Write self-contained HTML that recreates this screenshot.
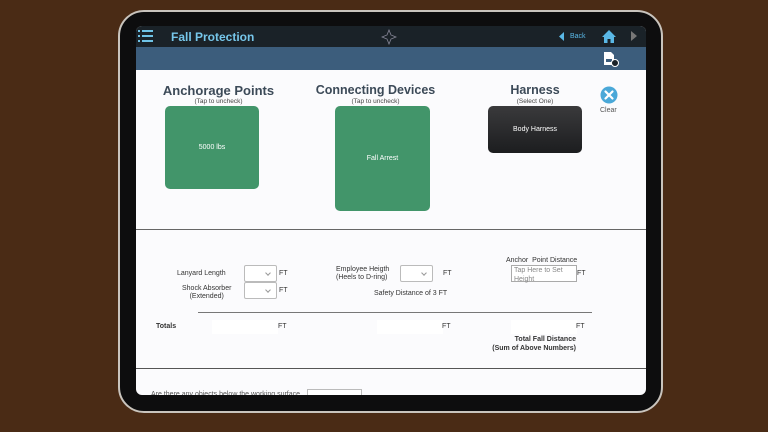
<!DOCTYPE html>
<html><head><meta charset="utf-8"><style>
*{margin:0;padding:0;box-sizing:border-box}
body{width:768px;height:432px;overflow:hidden;background:#4a2b15;font-family:"Liberation Sans",sans-serif;position:relative}
.abs{position:absolute}
.frame{left:118px;top:10px;width:545px;height:403px;border-radius:26px;background:#0d0d0e;border:2px solid #c9c4bd}
.screen{left:136px;top:26px;width:510px;height:369px;border-radius:6px;overflow:hidden;background:#fbfbfd}
.hdr{left:0;top:0;width:510px;height:21px;background:#1a2228}
.blue{left:0;top:21px;width:510px;height:23px;background:#3c5d7c}
.t{position:absolute;color:#333;font-size:7px;white-space:nowrap}
.h{position:absolute;color:#3c4a58;font-size:12.5px;font-weight:bold;text-align:center;white-space:nowrap}
.sub{position:absolute;color:#444;font-size:6.5px;text-align:center;white-space:nowrap}
.box{position:absolute;border-radius:5px;background:#42956a;color:#fff;font-size:7px;display:flex;align-items:center;justify-content:center}
.sel{position:absolute;width:33px;height:17px;border:1px solid #bbb;background:#fff;border-radius:2px}
.sel:after{content:"";position:absolute;right:6px;top:5px;width:3px;height:3px;border-right:1px solid #999;border-bottom:1px solid #999;transform:rotate(45deg)}
.in{position:absolute;background:#fff;height:14px}
</style></head><body>
<div class="abs frame"></div>
<div class="abs screen">
 <div class="abs hdr">
  <svg class="abs" style="left:2px;top:3px" width="15" height="14"><g fill="#6fc3e6"><rect x="0" y="1" width="2" height="2"/><rect x="4" y="1" width="11" height="2"/><rect x="0" y="6" width="2" height="2"/><rect x="4" y="6" width="11" height="2"/><rect x="0" y="11" width="2" height="2"/><rect x="4" y="11" width="11" height="2"/></g></svg>
  <div class="abs" style="left:35px;top:4px;color:#76c6ea;font-size:12px;font-weight:bold">Fall Protection</div>
  <svg class="abs" style="left:245px;top:3px" width="16" height="16"><path d="M8 1 L10 6 L15 8 L10 10 L8 15 L6 10 L1 8 L6 6 Z" fill="none" stroke="#889" stroke-width="0.8"/></svg>
  <svg class="abs" style="left:423px;top:6px" width="6" height="9"><path d="M5 0 L0 4.5 L5 9Z" fill="#5ab8e6"/></svg>
  <div class="abs" style="left:434px;top:7px;color:#5ab8e6;font-size:7px">Back</div>
  <svg class="abs" style="left:466px;top:4px" width="14" height="13"><path d="M7 0 L14 7 L12 7 L12 13 L8.5 13 L8.5 9 L5.5 9 L5.5 13 L2 13 L2 7 L0 7Z" fill="#5ab8e6"/></svg>
  <svg class="abs" style="left:495px;top:5px" width="6" height="10"><path d="M0 0 L6 5 L0 10Z" fill="#777"/></svg>
 </div>
 <div class="abs blue">
  <svg class="abs" style="left:467px;top:4px" width="16" height="16"><path d="M1 1 H8 L11 4 V14 H1Z" fill="#fff"/><rect x="3" y="8" width="6" height="3" fill="#3c5d7c"/><circle cx="12" cy="12" r="3.5" fill="#1a2228" stroke="#fff" stroke-width="1"/></svg>
 </div>
 <div class="h" style="left:25px;top:57px;width:115px;font-size:13px">Anchorage Points</div>
 <div class="sub" style="left:35px;top:72px;width:95px">(Tap to uncheck)</div>
 <div class="h" style="left:172px;top:57px;width:135px">Connecting Devices</div>
 <div class="sub" style="left:172px;top:72px;width:135px">(Tap to uncheck)</div>
 <div class="h" style="left:352px;top:57px;width:94px">Harness</div>
 <div class="sub" style="left:352px;top:72px;width:94px">(Select One)</div>
 <svg class="abs" style="left:464px;top:60px" width="18" height="18"><circle cx="9" cy="9" r="8.5" fill="#4aa8d8"/><path d="M5.5 5.5 L12.5 12.5 M12.5 5.5 L5.5 12.5" stroke="#fff" stroke-width="2.2" stroke-linecap="round"/></svg>
 <div class="t" style="left:464px;top:81px;color:#555">Clear</div>
 <div class="box" style="left:29px;top:80px;width:94px;height:83px">5000 lbs</div>
 <div class="box" style="left:199px;top:80px;width:95px;height:105px">Fall Arrest</div>
 <div class="box" style="left:352px;top:80px;width:94px;height:47px;background:linear-gradient(#3a3a3c,#1c1d1f)">Body Harness</div>
 <div class="abs" style="left:0;top:203px;width:510px;height:1px;background:#666"></div>
 <div class="t" style="left:41px;top:244px">Lanyard Length</div>
 <div class="sel" style="left:108px;top:239px"></div><div class="t" style="left:143px;top:244px">FT</div>
 <div class="t" style="left:46px;top:259px;text-align:center;line-height:8px">Shock Absorber<br>(Extended)</div>
 <div class="sel" style="left:108px;top:256px"></div><div class="t" style="left:143px;top:261px">FT</div>
 <div class="t" style="left:200px;top:240px;line-height:8px">Employee Heigth<br>(Heels to D-ring)</div>
 <div class="sel" style="left:264px;top:239px"></div><div class="t" style="left:307px;top:244px">FT</div>
 <div class="t" style="left:238px;top:264px">Safety Distance of 3 FT</div>
 <div class="t" style="left:370px;top:231px">Anchor&nbsp; Point Distance</div>
 <div class="abs" style="left:375px;top:239px;width:66px;height:17px;border:1px solid #aaa;background:#fff"></div>
 <div class="t" style="left:378px;top:240px;color:#888;line-height:9px">Tap Here to Set<br>Height</div>
 <div class="t" style="left:441px;top:244px">FT</div>
 <div class="abs" style="left:62px;top:286px;width:394px;height:1px;background:#777"></div>
 <div class="t" style="left:20px;top:297px;font-weight:bold">Totals</div>
 <div class="in" style="left:76px;top:294px;width:66px"></div><div class="t" style="left:142px;top:297px">FT</div>
 <div class="in" style="left:241px;top:294px;width:66px"></div><div class="t" style="left:306px;top:297px">FT</div>
 <div class="in" style="left:375px;top:294px;width:66px"></div><div class="t" style="left:440px;top:297px">FT</div>
 <div class="t" style="left:356px;top:309px;width:84px;text-align:right;font-weight:bold;line-height:9px">Total Fall Distance<br>(Sum of Above Numbers)</div>
 <div class="abs" style="left:0;top:342px;width:510px;height:1px;background:#555"></div>
 <div class="t" style="left:15px;top:365px;color:#555">Are there any objects below the working surface</div>
 <div class="abs" style="left:171px;top:363px;width:55px;height:12px;border:1px solid #bbb;background:#fff"></div>
</div>
</body></html>
